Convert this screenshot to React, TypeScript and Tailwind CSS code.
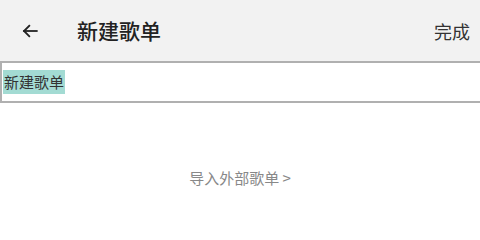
export default function App() {
  return (
    <div
      className="w-[480px] h-[233px] bg-white overflow-hidden"
      style={{ fontFamily: '"Noto Sans CJK SC", "Noto Sans", sans-serif' }}
    >
      <header className="h-[61px] bg-[#f2f2f2] flex items-center">
        <svg
          className="ml-[21px] w-[18px] h-[18px] text-[#222]"
          viewBox="0 0 24 24"
          fill="none"
          stroke="currentColor"
          strokeWidth={2.4}
          strokeLinecap="square"
        >
          <path d="M21 12H4" />
          <path d="M11 5l-7 7 7 7" />
        </svg>
        <h1 className="ml-[38px] text-[21px] font-medium text-[#222] leading-none">
          新建歌单
        </h1>
        <button className="ml-auto mr-[10px] text-[18px] text-[#333] leading-none">
          完成
        </button>
      </header>
      <div className="h-[42px] border-y-2 border-l-2 border-[#b0b0b0] flex items-center">
        <span className="ml-[1px] bg-[#a3dbd3] text-[15px] text-[#333] leading-[24px] px-[1px]">
          新建歌单
        </span>
      </div>
      <div className="flex justify-center pt-[67px]">
        <span className="text-[15px] text-[#888] leading-none">导入外部歌单 &gt;</span>
      </div>
    </div>
  );
}
